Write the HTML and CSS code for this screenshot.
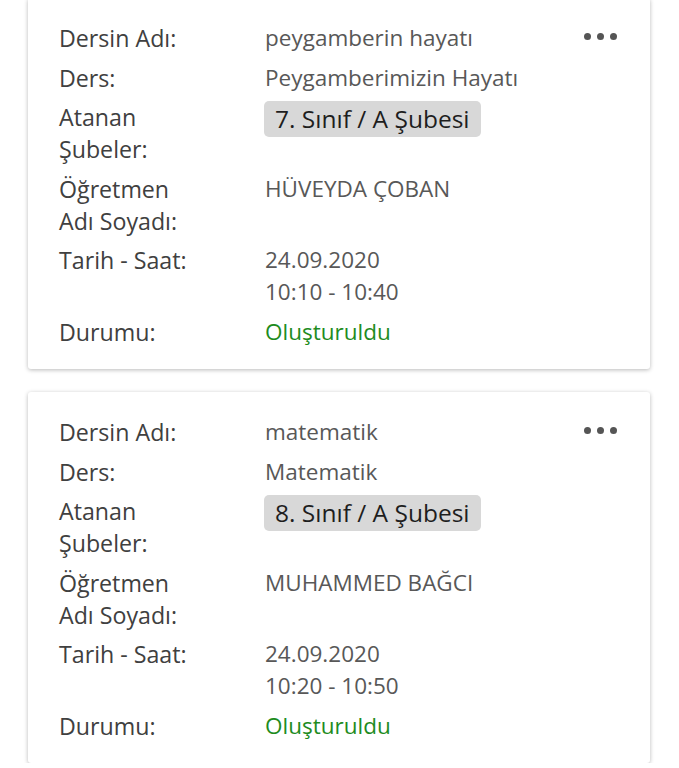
FILE: index.html
```html
<!DOCTYPE html>
<html lang="tr">
<head>
<meta charset="utf-8">
<link rel="stylesheet" href="styles.css">
</head>
<body>
<div class="list">
  <div class="card">
    <div class="fields">
      <div class="label">Dersin Adı:</div><div class="value">peygamberin hayatı</div>
      <div class="label">Ders:</div><div class="value">Peygamberimizin Hayatı</div>
      <div class="label">Atanan<br>Şubeler:</div><div class="value"><span class="badge">7. Sınıf / A Şubesi</span></div>
      <div class="label">Öğretmen<br>Adı Soyadı:</div><div class="value">HÜVEYDA ÇOBAN</div>
      <div class="label">Tarih - Saat:</div><div class="value">24.09.2020<br>10:10 - 10:40</div>
      <div class="label">Durumu:</div><div class="value status">Oluşturuldu</div>
    </div>
    <div class="dots"><span></span><span></span><span></span></div>
  </div>
  <div class="card">
    <div class="fields">
      <div class="label">Dersin Adı:</div><div class="value">matematik</div>
      <div class="label">Ders:</div><div class="value">Matematik</div>
      <div class="label">Atanan<br>Şubeler:</div><div class="value"><span class="badge">8. Sınıf / A Şubesi</span></div>
      <div class="label">Öğretmen<br>Adı Soyadı:</div><div class="value">MUHAMMED BAĞCI</div>
      <div class="label">Tarih - Saat:</div><div class="value">24.09.2020<br>10:20 - 10:50</div>
      <div class="label">Durumu:</div><div class="value status">Oluşturuldu</div>
    </div>
    <div class="dots"><span></span><span></span><span></span></div>
  </div>
</div>
</body>
</html>
```

FILE: styles.css
```css
html, body {
  margin: 0;
  padding: 0;
  background: #ffffff;
}
body {
  font-family: "Open Sans", "Liberation Sans", sans-serif;
}
.list {
  margin-top: -2px;
  padding: 0 29px 0 28px;
  display: flex;
  flex-direction: column;
  gap: 23px;
}
.card {
  background: #fff;
  border-radius: 3px;
  box-shadow: 0 1px 4px rgba(0, 0, 0, 0.28);
  padding: 24px 33px 21px 31px;
  display: flex;
  align-items: flex-start;
}
.fields {
  flex: 1;
  display: grid;
  grid-template-columns: 206px 1fr;
  row-gap: 7.6px;
  font-size: 22.5px;
  line-height: 32px;
}
.label {
  color: #404040;
  font-size: 23.2px;
}
.value {
  color: #585858;
}
.status {
  color: #1e8c1e;
}
.badge {
  display: inline-block;
  background: #d8d8d8;
  color: #1e1e1e;
  border-radius: 5px;
  padding: 2px 11px;
  font-size: 24.5px;
  line-height: 32px;
  margin-left: -1px;
}
.dots {
  display: flex;
  gap: 6px;
  padding-top: 11px;
}
.dots span {
  width: 7px;
  height: 7px;
  border-radius: 50%;
  background: #555;
}
```
